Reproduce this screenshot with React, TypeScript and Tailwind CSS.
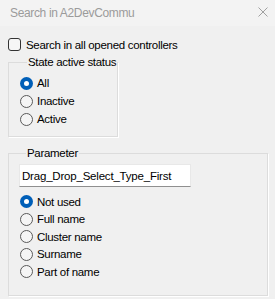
import React from "react";

function Radio({ checked, label }: { checked?: boolean; label: string }) {
  return (
    <div className="flex items-center h-[17.5px]">
      {checked ? (
        <span className="w-[13px] h-[13px] rounded-full bg-[#005fb8] flex items-center justify-center shrink-0">
          <span className="w-[5px] h-[5px] rounded-full bg-white" />
        </span>
      ) : (
        <span className="w-[13px] h-[13px] rounded-full border border-[#5a5a5a] bg-[#f5f5f5] shrink-0" />
      )}
      <span className="ml-[4px] whitespace-nowrap">{label}</span>
    </div>
  );
}

export default function App() {
  return (
    <div className="w-[275px] h-[299px] bg-[#f0f0f0] flex flex-col text-black text-[11.5px] leading-[12px] font-['Liberation_Sans',Arial,sans-serif] tracking-[-0.3px] overflow-hidden">
      <div className="h-[26px] bg-[#f3f3f3] flex items-center justify-between pl-[10px] pr-[7px] shrink-0">
        <span className="text-[12px] text-[#9b9b9b] tracking-[-0.35px]">Search in A2DevCommu</span>
        <svg width="10" height="10" viewBox="0 0 10 10" className="mt-[-2px]">
          <path d="M0.5 0.5 L9.5 9.5 M9.5 0.5 L0.5 9.5" stroke="#a0a0a0" strokeWidth="1" />
        </svg>
      </div>
      <div className="flex flex-col px-[8px]">
        <div className="flex items-center mt-[12px] h-[13px]">
          <span className="w-[13px] h-[13px] rounded-[3px] border border-[#333] bg-[#f6f6f6] shrink-0" />
          <span className="ml-[5px] whitespace-nowrap">Search in all opened controllers</span>
        </div>
        <fieldset className="mt-[5px] w-[110px] border border-[#dcdcdc] shadow-[1px_1px_0_#ffffff] pl-[11px] pb-[8px] pt-[6px]">
          <legend className="ml-[7px] px-[1px] leading-[12px] whitespace-nowrap">State active status</legend>
          <div className="flex flex-col">
            <div className="h-[18px] flex flex-col justify-center"><Radio checked label="All" /></div>
            <div className="h-[18px] flex flex-col justify-center"><Radio label="Inactive" /></div>
            <div className="h-[18px] flex flex-col justify-center"><Radio label="Active" /></div>
          </div>
        </fieldset>
        <fieldset className="mt-[10px] w-[260px] border border-[#dcdcdc] shadow-[1px_1px_0_#ffffff] pl-[10px] pb-[14px] pt-[5px]">
          <legend className="ml-[7px] px-[1px] leading-[12px] whitespace-nowrap">Parameter</legend>
          <div className="w-[172px] h-[23px] bg-white border border-[#e8e8e8] border-b-[#8f8f8f] flex items-center pl-[2px] tracking-[-0.2px]">
            Drag_Drop_Select_Type_First
          </div>
          <div className="flex flex-col mt-[6px] pl-[1px]">
            <Radio checked label="Not used" />
            <Radio label="Full name" />
            <Radio label="Cluster name" />
            <Radio label="Surname" />
            <Radio label="Part of name" />
          </div>
        </fieldset>
      </div>
    </div>
  );
}
